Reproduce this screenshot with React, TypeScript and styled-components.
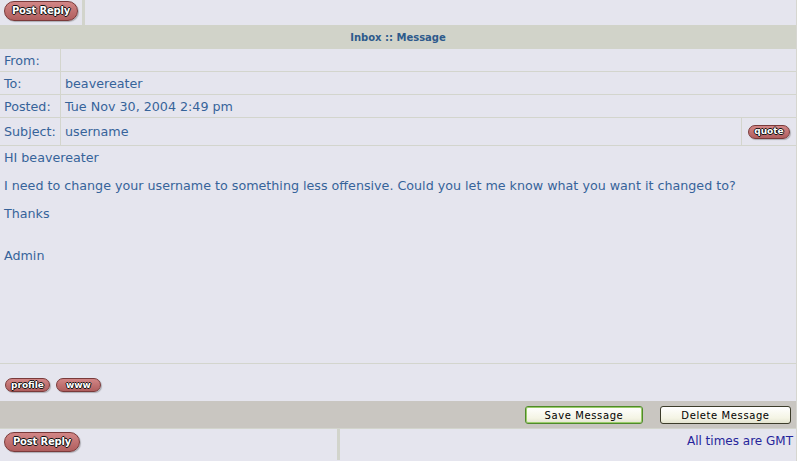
import React from "react";
import styled, { createGlobalStyle } from "styled-components";

const Global = createGlobalStyle`
  html, body { margin: 0; padding: 0; background: #ffffff; }
  body { font-family: "DejaVu Sans", Verdana, sans-serif; }
`;

const Page = styled.div`
  width: 796px;
  height: 461px;
  background: #e5e5ee;
  border-right: 1px solid #d6d6d0;
  display: flex;
  flex-direction: column;
  overflow: hidden;
`;

const ActionRow = styled.div<{ $split: number; $h: number }>`
  display: grid;
  grid-template-columns: ${(p) => p.$split}px 3px 1fr;
  height: ${(p) => p.$h}px;
  flex: none;
`;

const ActionCell = styled.div<{ $align?: string; $top?: number }>`
  display: flex;
  align-items: flex-start;
  justify-content: ${(p) => p.$align || "flex-start"};
  padding: ${(p) => p.$top ?? 1}px 4px 0;
  box-sizing: border-box;
`;

const Divider = styled.div`
  background: #d2d4cc;
`;

const Pill = styled.button<{ $size?: "big" | "small"; $pad?: number }>`
  font-family: "DejaVu Sans", Verdana, sans-serif;
  font-weight: bold;
  font-size: ${(p) => (p.$size === "big" ? "10px" : "9px")};
  letter-spacing: ${(p) => (p.$size === "big" ? "-0.2px" : "0")};
  white-space: nowrap;
  color: #ffffff;
  text-shadow: -1px 0 #111, 1px 0 #111, 0 -1px #111, 0 1px #111;
  background: linear-gradient(#d28686, #b05e5e);
  border: 1px solid #7a3a3a;
  border-radius: 10px;
  width: ${(p) => (p.$size === "big" ? "76px" : "auto")};
  height: ${(p) => (p.$size === "big" ? "20px" : "14px")};
  padding: ${(p) => (p.$size === "big" ? "0" : `0 ${p.$pad ?? 5}px`)};
  line-height: 1;
  cursor: pointer;
  box-shadow: 1px 1px 1px rgba(0, 0, 0, 0.25);
`;

const HeaderBar = styled.div`
  height: 24px;
  flex: none;
  background: #d1d3c9;
  color: #2d5a8c;
  font-size: 10px;
  font-weight: bold;
  display: flex;
  align-items: center;
  justify-content: center;
`;

const FieldRow = styled.div<{ $h: number }>`
  display: grid;
  grid-template-columns: 61px 1fr auto;
  height: ${(p) => p.$h}px;
  flex: none;
  border-bottom: 1px solid #d3d5cd;
  box-sizing: border-box;
  color: #36639a;
  font-size: 12.7px;
`;

const Label = styled.div`
  padding-left: 4px;
  display: flex;
  align-items: center;
  border-right: 1px solid #d3d5cd;
`;

const Value = styled.div`
  padding-left: 4px;
  display: flex;
  align-items: center;
`;

const SideCell = styled.div`
  width: 54px;
  border-left: 1px solid #d3d5cd;
  display: flex;
  align-items: center;
  justify-content: center;
`;

const Body = styled.div`
  height: 218px;
  flex: none;
  border-bottom: 1px solid #d3d5cd;
  box-sizing: border-box;
  padding: 5px 4px 0;
  color: #36639a;
  font-size: 12.7px;
  line-height: 14px;
`;

const Line = styled.div<{ $gap?: number }>`
  margin-top: ${(p) => (p.$gap || 0) * 14}px;
  white-space: nowrap;
`;

const ProfileRow = styled.div`
  height: 37px;
  flex: none;
  display: flex;
  align-items: center;
  gap: 6px;
  padding: 5px 5px 0;
  box-sizing: border-box;
`;

const ButtonBar = styled.div`
  height: 28px;
  flex: none;
  background: #c9c6c1;
  border-bottom: 1px solid #d3d5cd;
  box-sizing: border-box;
  display: flex;
  justify-content: flex-end;
  align-items: flex-start;
  gap: 17px;
  padding: 5px 5px 0 0;
`;

const FormButton = styled.button<{ $w: number; $active?: boolean }>`
  width: ${(p) => p.$w}px;
  height: 18px;
  font-family: "DejaVu Sans", Verdana, sans-serif;
  font-size: 10px;
  letter-spacing: 0.6px;
  color: #000;
  background: linear-gradient(#ffffff, #f4f4e4 70%, #e4e4d0);
  border: 1px solid ${(p) => (p.$active ? "#4f8a2a" : "#3c3c2a")};
  box-shadow: ${(p) => (p.$active ? "inset 0 0 0 1px #9acd6a" : "none")};
  border-radius: 3px;
  padding: 0;
  cursor: pointer;
`;

const Note = styled.span`
  color: #25259b;
  font-size: 12px;
  margin-top: 4px;
  margin-right: -1px;
`;

export default function App() {
  return (
    <>
      <Global />
      <Page>
        <ActionRow $split={82} $h={25}>
          <ActionCell>
            <Pill $size="big">Post Reply</Pill>
          </ActionCell>
          <Divider />
          <ActionCell />
        </ActionRow>
        <HeaderBar>Inbox :: Message</HeaderBar>
        <FieldRow $h={23}>
          <Label>From:</Label>
          <Value />
          <span />
        </FieldRow>
        <FieldRow $h={23}>
          <Label>To:</Label>
          <Value>beavereater</Value>
          <span />
        </FieldRow>
        <FieldRow $h={23}>
          <Label>Posted:</Label>
          <Value>Tue Nov 30, 2004 2:49 pm</Value>
          <span />
        </FieldRow>
        <FieldRow $h={28}>
          <Label>Subject:</Label>
          <Value>username</Value>
          <SideCell>
            <Pill>quote</Pill>
          </SideCell>
        </FieldRow>
        <Body>
          <Line>HI beavereater</Line>
          <Line $gap={1}>
            I need to change your username to something less offensive. Could you let me know what you want it changed to?
          </Line>
          <Line $gap={1}>Thanks</Line>
          <Line $gap={2}>Admin</Line>
        </Body>
        <ProfileRow>
          <Pill>profile</Pill>
          <Pill $pad={9}>www</Pill>
        </ProfileRow>
        <ButtonBar>
          <FormButton $w={118} $active>
            Save Message
          </FormButton>
          <FormButton $w={131}>Delete Message</FormButton>
        </ButtonBar>
        <ActionRow $split={337} $h={31}>
          <ActionCell $top={3}>
            <Pill $size="big">Post Reply</Pill>
          </ActionCell>
          <Divider />
          <ActionCell $align="flex-end">
            <Note>All times are GMT</Note>
          </ActionCell>
        </ActionRow>
      </Page>
    </>
  );
}
